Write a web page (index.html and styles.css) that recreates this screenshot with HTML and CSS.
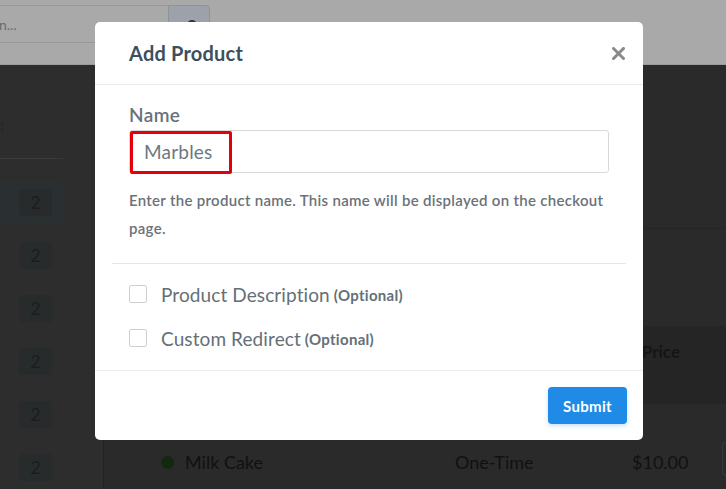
FILE: index.html
```html
<!DOCTYPE html>
<html>
<head>
<meta charset="utf-8">
<link rel="stylesheet" href="styles.css">
</head>
<body>
<div class="page">
  <div class="topbar">
    <div class="search"><span class="search-text">n...</span></div>
    <div class="search-btn"><span class="search-icon"></span></div>
  </div>
  <div class="main">
    <aside class="sidebar">
      <div class="side-head"><span class="side-letter">:</span></div>
      <div class="side-row active"><span class="badge">2</span></div>
      <div class="side-row"><span class="badge">2</span></div>
      <div class="side-row"><span class="badge">2</span></div>
      <div class="side-row"><span class="badge">2</span></div>
      <div class="side-row"><span class="badge">2</span></div>
      <div class="side-row"><span class="badge">2</span></div>
    </aside>
    <section class="content">
      <div class="content-top"></div>
      <div class="content-mid"></div>
      <div class="table-head"><span class="th-price">Price</span></div>
      <div class="table-row">
        <span class="dot"></span>
        <span class="td-name">Milk Cake</span>
        <span class="td-type">One-Time</span>
        <span class="td-price">$10.00</span>
        <span class="td-btn"></span>
      </div>
    </section>
  </div>

  <div class="modal">
    <div class="modal-header">
      <h2 class="modal-title">Add Product</h2>
      <svg class="close" width="13" height="13" viewBox="0 0 13 13"><path d="M1.5 1.5 L11.5 11.5 M11.5 1.5 L1.5 11.5" stroke="#8a8a8a" stroke-width="3" stroke-linecap="square"/></svg>
    </div>
    <div class="modal-body">
      <div class="field-label">Name</div>
      <div class="input">
        <span class="input-text">Marbles</span>
        <span class="highlight"></span>
      </div>
      <p class="help">Enter the product name. This name will be displayed on the checkout page.</p>
    </div>
    <div class="options">
      <div class="option"><span class="checkbox"></span><span class="opt-label">Product Description</span><span class="opt-note">(Optional)</span></div>
      <div class="option"><span class="checkbox"></span><span class="opt-label">Custom Redirect</span><span class="opt-note">(Optional)</span></div>
    </div>
    <div class="modal-footer">
      <button class="submit">Submit</button>
    </div>
  </div>
</div>
</body>
</html>
```

FILE: styles.css
```css
* { box-sizing: border-box; }
html, body { margin: 0; padding: 0; }
body {
  width: 726px;
  height: 489px;
  overflow: hidden;
  background: #2a2a2a;
  font-family: Lato, "Open Sans", sans-serif;
}
.page {
  position: relative;
  width: 726px;
  height: 489px;
  overflow: hidden;
}
.topbar {
  height: 65px;
  background: #a9a9a9;
  display: flex;
  align-items: flex-start;
  padding-top: 5px;
  border-bottom: 1px solid #9c9c9c;
}
.search {
  width: 172px;
  height: 38px;
  margin-left: -4px;
  border: 1px solid #989898;
  border-right: none;
  border-radius: 3px 0 0 3px;
  display: flex;
  align-items: center;
  padding-left: 2px;
}
.search-text { color: #6a6a6a; font-size: 14px; }
.search-btn {
  width: 42px;
  height: 38px;
  background: #9da1a9;
  border: 1px solid #8e9299;
  border-radius: 0 4px 4px 0;
  position: relative;
}
.search-icon {
  position: absolute;
  left: 18px;
  top: 14px;
  width: 10px;
  height: 10px;
  border-radius: 50%;
  background: #333;
}
.main {
  display: flex;
  height: 424px;
  overflow: hidden;
}
.sidebar {
  width: 103px;
  flex: none;
  background: #2d2d2d;
  display: flex;
  flex-direction: column;
}
.side-head {
  height: 94px;
  width: 63px;
  flex: none;
  border-bottom: 1px solid #3a3a3a;
  position: relative;
}
.side-letter {
  position: absolute;
  left: 0;
  top: 50px;
  color: #1c2733;
  font-size: 16px;
  font-weight: 700;
}
.side-row {
  width: 63px;
  height: 42px;
  flex: none;
  margin-top: 11px;
  display: flex;
  align-items: center;
  padding-left: 19px;
}
.side-head + .side-row { margin-top: 22px; }
.side-row.active { background: #2a2f31; }
.badge {
  width: 33px;
  height: 27px;
  border-radius: 4px;
  background: #272b2c;
  color: #1d1d1d;
  font-size: 18px;
  display: flex;
  align-items: center;
  justify-content: center;
}
.content {
  flex: 1;
  border-left: 1px solid #222;
  display: flex;
  flex-direction: column;
}
.content > * { flex: none; }
.content-top {
  height: 164px;
  border-bottom: 1px solid #252525;
}
.content-mid { height: 97px; }
.table-head {
  height: 78px;
  background: #252525;
  display: flex;
  align-items: flex-start;
  justify-content: flex-end;
  padding-right: 46px;
  padding-top: 15px;
}
.th-price { color: #151515; font-size: 17px; font-weight: 700; }
.table-row {
  height: 116px;
  display: flex;
  align-items: center;
  position: relative;
}
.dot {
  width: 13px; height: 13px; border-radius: 50%;
  background: #13290f;
  margin-left: 57px;
  flex: none;
}
.td-name { margin-left: 11px; width: 270px; color: #111; font-size: 18px; flex: none; }
.td-type { width: 177px; color: #111; font-size: 18px; flex: none; }
.td-price { color: #111; font-size: 18px; flex: none; }
.td-btn {
  position: absolute;
  left: 618px;
  top: 38px;
  width: 40px;
  height: 34px;
  border: 1px solid #3a3a3a;
  border-radius: 4px;
}
.modal {
  position: absolute;
  left: 95px;
  top: 22px;
  width: 548px;
  height: 418px;
  background: #fff;
  border-radius: 5px;
  display: flex;
  flex-direction: column;
}
.modal-header {
  height: 63px;
  border-bottom: 1px solid #e9e9e9;
  display: flex;
  align-items: center;
  justify-content: space-between;
  padding: 0 18px 0 34px;
}
.modal-title {
  margin: 0;
  font-size: 20px;
  font-weight: 700;
  color: #3d4f5c;
  letter-spacing: 0.2px;
}
.close { margin-top: 1px; }
.modal-body {
  padding: 19px 34px 0 34px;
}
.field-label {
  font-size: 19px;
  line-height: 22px;
  color: #67717a;
  font-weight: 600;
  letter-spacing: 0.4px;
  height: 23px;
}
.input {
  margin-top: 3px;
  height: 43px;
  width: 480px;
  border: 1px solid #d9d9d9;
  border-radius: 3px;
  display: flex;
  align-items: center;
  padding-left: 14px;
  position: relative;
}
.input-text { font-size: 19px; color: #6d7880; letter-spacing: 0.2px; }
.highlight {
  position: absolute;
  left: 0;
  top: 0;
  width: 102px;
  height: 43px;
  border: 3px solid #e3000b;
  border-radius: 2px;
}
.help {
  margin: 13px 0 0 0;
  font-size: 15px;
  line-height: 28px;
  color: #6b7278;
  font-weight: 600;
  letter-spacing: 0.3px;
  width: 480px;
}
.options {
  margin: 21px 17px 0 17px;
  border-top: 1px solid #e6e6e6;
  padding: 8px 0 10px 17px;
}
.option {
  height: 44px;
  display: flex;
  align-items: center;
}
.checkbox {
  width: 18px;
  height: 18px;
  border: 1.5px solid #cfcfcf;
  border-radius: 2px;
  margin-right: 14px;
}
.opt-label { font-size: 19px; color: #646f77; letter-spacing: 0.1px; }
.opt-note { font-size: 15px; color: #646f77; font-weight: 700; margin-left: 4px; margin-top: 2px; letter-spacing: 0.3px; }
.modal-footer {
  border-top: 1px solid #ececec;
  flex: 1;
  display: flex;
  align-items: center;
  justify-content: flex-end;
  padding-right: 16px;
}
.submit {
  width: 79px;
  height: 37px;
  border: none;
  border-radius: 4px;
  background: #1f8be6;
  color: #fff;
  font-family: Lato, sans-serif;
  font-size: 15px;
  font-weight: 700;
  letter-spacing: 0.3px;
  box-shadow: 0 2px 4px rgba(31,139,230,0.25);
}
```
